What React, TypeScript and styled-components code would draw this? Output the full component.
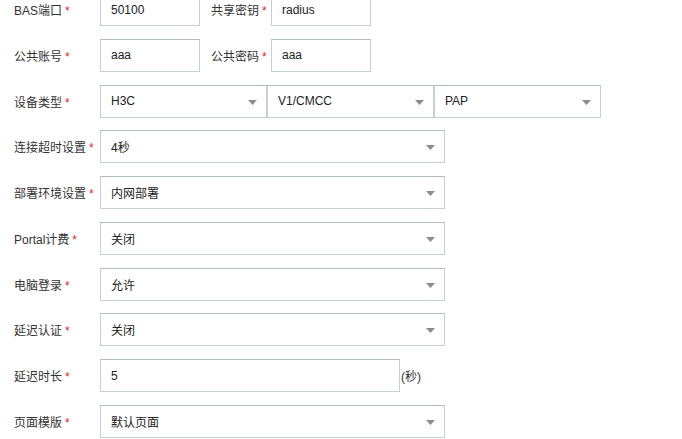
import React from "react";
import styled, { createGlobalStyle } from "styled-components";

const Global = createGlobalStyle`
  html, body { margin: 0; padding: 0; background: #fff; }
  body { font-family: "Liberation Sans", "Noto Sans CJK SC", sans-serif; font-size: 12px; color: #333; overflow: hidden; }
  * { box-sizing: border-box; }
`;

const Form = styled.div`
  display: flex;
  flex-direction: column;
  gap: 12.75px;
  margin-top: -7px;
`;

const Row = styled.div`
  display: flex;
  align-items: center;
  height: 33px;
`;

const Label = styled.label<{ $w?: number; $ml?: number }>`
  flex: none;
  width: ${(p) => p.$w ?? 100}px;
  padding-left: ${(p) => (p.$ml !== undefined ? 0 : 14)}px;
  margin-left: ${(p) => p.$ml ?? 0}px;
  font-size: 12px;
  color: #333;
  white-space: nowrap;
`;

const Star = styled.span`
  color: #e8242b;
  margin-left: 3px;
`;

const Input = styled.input<{ $w: number }>`
  width: ${(p) => p.$w}px;
  height: 33px;
  border: 1px solid #c6ced6;
  border-top-color: #b3bcc5;
  padding: 0 10px;
  font-family: inherit;
  font-size: 12px;
  color: #222;
  background: #fff;
  outline: none;
  border-radius: 0;
  flex: none;
`;

const SelectWrap = styled.div<{ $w: number }>`
  position: relative;
  width: ${(p) => p.$w}px;
  height: 33px;
  flex: none;
`;

const SelectBox = styled.div`
  width: 100%;
  height: 100%;
  border: 1px solid #c6ced6;
  border-top-color: #b3bcc5;
  padding: 0 10px;
  display: flex;
  align-items: center;
  font-size: 12px;
  color: #222;
  background: #fff;
`;

const Arrow = styled.svg`
  position: absolute;
  right: 10px;
  top: 15px;
  width: 9px;
  height: 5px;
`;

const Group = styled.div`
  display: flex;
`;

const Unit = styled.span`
  margin-left: 1px;
  font-size: 12px;
  color: #333;
`;

const Select = ({ w, value }: { w: number; value: string }) => (
  <SelectWrap $w={w}>
    <SelectBox>{value}</SelectBox>
    <Arrow viewBox="0 0 9 5">
      <path d="M0 0 H9 L4.5 5 Z" fill="#8c8c8c" />
    </Arrow>
  </SelectWrap>
);

const Req = ({ children, w, ml }: { children: React.ReactNode; w?: number; ml?: number }) => (
  <Label $w={w} $ml={ml}>
    {children}
    <Star>*</Star>
  </Label>
);

export default function App() {
  return (
    <>
      <Global />
      <Form>
        <Row>
          <Req>BAS端口</Req>
          <Input $w={100} defaultValue="50100" readOnly />
          <Req w={60} ml={11}>共享密钥</Req>
          <Input $w={100} defaultValue="radius" readOnly />
        </Row>
        <Row>
          <Req>公共账号</Req>
          <Input $w={100} defaultValue="aaa" readOnly />
          <Req w={60} ml={11}>公共密码</Req>
          <Input $w={100} defaultValue="aaa" readOnly />
        </Row>
        <Row>
          <Req>设备类型</Req>
          <Group>
            <Select w={167} value="H3C" />
            <Select w={167} value="V1/CMCC" />
            <Select w={167} value="PAP" />
          </Group>
        </Row>
        <Row>
          <Req>连接超时设置</Req>
          <Select w={345} value="4秒" />
        </Row>
        <Row>
          <Req>部署环境设置</Req>
          <Select w={345} value="内网部署" />
        </Row>
        <Row>
          <Req>Portal计费</Req>
          <Select w={345} value="关闭" />
        </Row>
        <Row>
          <Req>电脑登录</Req>
          <Select w={345} value="允许" />
        </Row>
        <Row>
          <Req>延迟认证</Req>
          <Select w={345} value="关闭" />
        </Row>
        <Row>
          <Req>延迟时长</Req>
          <Input $w={300} defaultValue="5" readOnly />
          <Unit>(秒)</Unit>
        </Row>
        <Row>
          <Req>页面模版</Req>
          <Select w={345} value="默认页面" />
        </Row>
      </Form>
    </>
  );
}
